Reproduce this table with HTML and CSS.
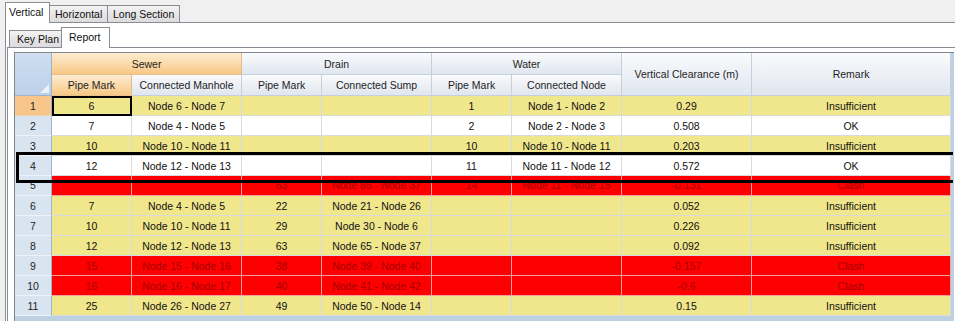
FILE: index.html
```html
<!DOCTYPE html>
<html lang="en">
<head>
    <meta charset="UTF-8">
    <title>Clearance Report</title>
    <link rel="stylesheet" href="styles.css">
</head>
<body>
    <div class="tabs">
        <div class="tab active tab-vertical">Vertical</div>
        <div class="tab tab-horizontal">Horizontal</div>
        <div class="tab tab-long">Long Section</div>
    </div>
    <div class="page">
        <div class="subtabs">
            <div class="subtab tab-keyplan">Key Plan</div>
            <div class="subtab active tab-report">Report</div>
        </div>
        <div class="subpage">
            <div class="grid">
                <table class="report">
                    <colgroup>
                        <col class="c-rh">
                        <col class="c-mark">
                        <col class="c-node">
                        <col class="c-mark">
                        <col class="c-node">
                        <col class="c-mark">
                        <col class="c-node">
                        <col class="c-clear">
                        <col class="c-remark">
                    </colgroup>
                    <thead>
                        <tr class="grp">
                            <th class="corner" rowspan="2"><svg width="9" height="9" viewBox="0 0 9 9"><polygon points="9,0 9,9 0,9" fill="#eef2f8"/></svg></th>
                            <th class="sel" colspan="2">Sewer</th>
                            <th colspan="2">Drain</th>
                            <th colspan="2">Water</th>
                            <th rowspan="2">Vertical Clearance (m)</th>
                            <th rowspan="2">Remark</th>
                        </tr>
                        <tr class="sub">
                            <th class="sel">Pipe Mark</th>
                            <th>Connected Manhole</th>
                            <th>Pipe Mark</th>
                            <th>Connected Sump</th>
                            <th>Pipe Mark</th>
                            <th>Connected Node</th>
                        </tr>
                    </thead>
                    <tbody>
                        <tr class="yl">
                            <th class="rh cur">1</th>
                            <td class="current">6</td><td>Node 6 - Node 7</td>
                            <td></td><td></td>
                            <td>1</td><td>Node 1 - Node 2</td>
                            <td>0.29</td><td>Insufficient</td>
                        </tr>
                        <tr class="wh">
                            <th class="rh">2</th>
                            <td>7</td><td>Node 4 - Node 5</td>
                            <td></td><td></td>
                            <td>2</td><td>Node 2 - Node 3</td>
                            <td>0.508</td><td>OK</td>
                        </tr>
                        <tr class="yl">
                            <th class="rh">3</th>
                            <td>10</td><td>Node 10 - Node 11</td>
                            <td></td><td></td>
                            <td>10</td><td>Node 10 - Node 11</td>
                            <td>0.203</td><td>Insufficient</td>
                        </tr>
                        <tr class="wh">
                            <th class="rh">4</th>
                            <td>12</td><td>Node 12 - Node 13</td>
                            <td></td><td></td>
                            <td>11</td><td>Node 11 - Node 12</td>
                            <td>0.572</td><td>OK</td>
                        </tr>
                        <tr class="rd squeezed">
                            <th class="rh">5</th>
                            <td></td><td></td>
                            <td>63</td><td>Node 65 - Node 37</td>
                            <td>14</td><td>Node 11 - Node 15</td>
                            <td>-0.131</td><td>Clash</td>
                        </tr>
                        <tr class="yl">
                            <th class="rh">6</th>
                            <td>7</td><td>Node 4 - Node 5</td>
                            <td>22</td><td>Node 21 - Node 26</td>
                            <td></td><td></td>
                            <td>0.052</td><td>Insufficient</td>
                        </tr>
                        <tr class="yl">
                            <th class="rh">7</th>
                            <td>10</td><td>Node 10 - Node 11</td>
                            <td>29</td><td>Node 30 - Node 6</td>
                            <td></td><td></td>
                            <td>0.226</td><td>Insufficient</td>
                        </tr>
                        <tr class="yl">
                            <th class="rh">8</th>
                            <td>12</td><td>Node 12 - Node 13</td>
                            <td>63</td><td>Node 65 - Node 37</td>
                            <td></td><td></td>
                            <td>0.092</td><td>Insufficient</td>
                        </tr>
                        <tr class="rd">
                            <th class="rh">9</th>
                            <td>15</td><td>Node 15 - Node 16</td>
                            <td>38</td><td>Node 39 - Node 40</td>
                            <td></td><td></td>
                            <td>-0.157</td><td>Clash</td>
                        </tr>
                        <tr class="rd">
                            <th class="rh">10</th>
                            <td>16</td><td>Node 16 - Node 17</td>
                            <td>40</td><td>Node 41 - Node 42</td>
                            <td></td><td></td>
                            <td>-0.6</td><td>Clash</td>
                        </tr>
                        <tr class="yl">
                            <th class="rh">11</th>
                            <td>25</td><td>Node 26 - Node 27</td>
                            <td>49</td><td>Node 50 - Node 14</td>
                            <td></td><td></td>
                            <td>0.15</td><td>Insufficient</td>
                        </tr>
                    </tbody>
                </table>
            </div>
        </div>
    </div>
    <!-- row drag marker drawn over the grid -->
    <div class="drop-mark"></div>
</body>
</html>
```

FILE: styles.css
```css
* {
    box-sizing: border-box;
}
body {
    margin: 0;
    width: 955px;
    height: 321px;
    overflow: hidden;
    position: relative;
    background: #f0f0f0;
    font-family: "Liberation Sans", Arial, sans-serif;
    font-size: 10.5px;
    color: #111;
}

/* outer tab strip */
.tabs {
    display: flex;
    align-items: flex-end;
    height: 22px;
    padding-left: 5px;
}
.tab {
    height: 17px;
    line-height: 16px;
    padding-left: 5px;
    border-top: 1px solid #898c95;
    border-right: 1px solid #898c95;
    background: linear-gradient(#f3f3f3, #e6e6e6 50%, #dcdcdc);
    white-space: nowrap;
}
.tab.active {
    height: 21px;
    line-height: 19px;
    margin-bottom: -1px;
    padding-left: 3px;
    border-left: 1px solid #898c95;
    background: #fff;
    position: relative;
    z-index: 1;
}
.tab-vertical { width: 45px; }
.tab-horizontal { width: 58px; }
.tab-long { width: 72px; }

.page {
    margin-left: 5px;
    height: 299px;
    border-top: 1px solid #898c95;
    border-left: 1px solid #898c95;
    background: #fff;
}

/* inner tab strip */
.subtabs {
    display: flex;
    align-items: flex-end;
    height: 24px;
    padding-left: 3px;
}
.subtab {
    height: 17px;
    line-height: 16px;
    padding-left: 7px;
    border-top: 1px solid #898c95;
    border-left: 1px solid #898c95;
    background: linear-gradient(#f3f3f3, #e6e6e6 50%, #dcdcdc);
    white-space: nowrap;
}
.subtab.active {
    height: 21px;
    line-height: 18px;
    margin-bottom: -1px;
    padding-left: 7px;
    border-right: 1px solid #898c95;
    background: #fff;
    position: relative;
    z-index: 1;
}
.tab-keyplan { width: 52px; }
.tab-report { width: 49px; }

.subpage {
    margin-left: 1px;
    height: 275px;
    padding: 4px 0 0 6px;
    border-top: 1px solid #898c95;
    border-left: 1px solid #898c95;
    background: #fff;
}

/* data grid */
.grid {
    width: 940px;
    height: 270px;
    border-top: 1px solid #828790;
    border-left: 1px solid #828790;
    background: #bdd1e3;
}
.report {
    border-collapse: separate;
    border-spacing: 0;
    table-layout: fixed;
    width: 936px;
}
.c-rh { width: 37px; }
.c-mark { width: 80px; }
.c-node { width: 110px; }
.c-clear { width: 130px; }
.c-remark { width: 199px; }

.report th,
.report td {
    padding: 0;
    text-align: center;
    font-weight: normal;
    white-space: nowrap;
    overflow: hidden;
}
.report thead th {
    border-right: 1px solid #c5cfdd;
    border-bottom: 1px solid #c5cfdd;
    background: linear-gradient(#fafbfd, #eef1f6 45%, #e0e6ef);
    color: #1e1e1e;
}
.report thead th.sel {
    background: linear-gradient(#fdecd2, #fbdcaf 45%, #f7c785);
    border-right-color: #e2bd8c;
    border-bottom-color: #eac08a;
}
.report thead .corner {
    background: linear-gradient(#cfdef1, #bcd0e9);
    border-right-color: #9fb3cb;
    border-bottom-color: #9fb3cb;
    vertical-align: bottom;
    text-align: right;
    line-height: 0;
    padding: 0 2px 2px 0;
}
tr.grp { height: 22px; }
tr.sub { height: 21px; }

.report tbody tr { height: 20px; }
.report td {
    line-height: 18px;
    border-right: 1px solid #d7dade;
    border-bottom: 1px solid #d7dade;
}
.report th.rh {
    line-height: 18px;
    background: #d9e4f1;
    border-right: 1px solid #9fb3cb;
    border-bottom: 1px solid #edf2f8;
    color: #1e1e1e;
}
.report th.rh.cur {
    background: #f8c68a;
    border-bottom-color: #f3d3aa;
}
tr.yl td { background: #f0e68c; }
tr.wh td { background: #fff; }
tr.rd td {
    background: #ff0000;
    color: #a40000;
    border-color: #f3a0a0;
}
tr.squeezed td,
tr.squeezed th.rh {
    line-height: 16px;
    vertical-align: top;
    padding-top: 1px;
}
td.current {
    outline: 2px solid #000;
    outline-offset: -2px;
}

/* bold marker where the dragged row will land */
.drop-mark {
    position: absolute;
    left: 16px;
    top: 152px;
    width: 937px;
    height: 31px;
    border: 3px solid #000;
    border-right: none;
}
```
